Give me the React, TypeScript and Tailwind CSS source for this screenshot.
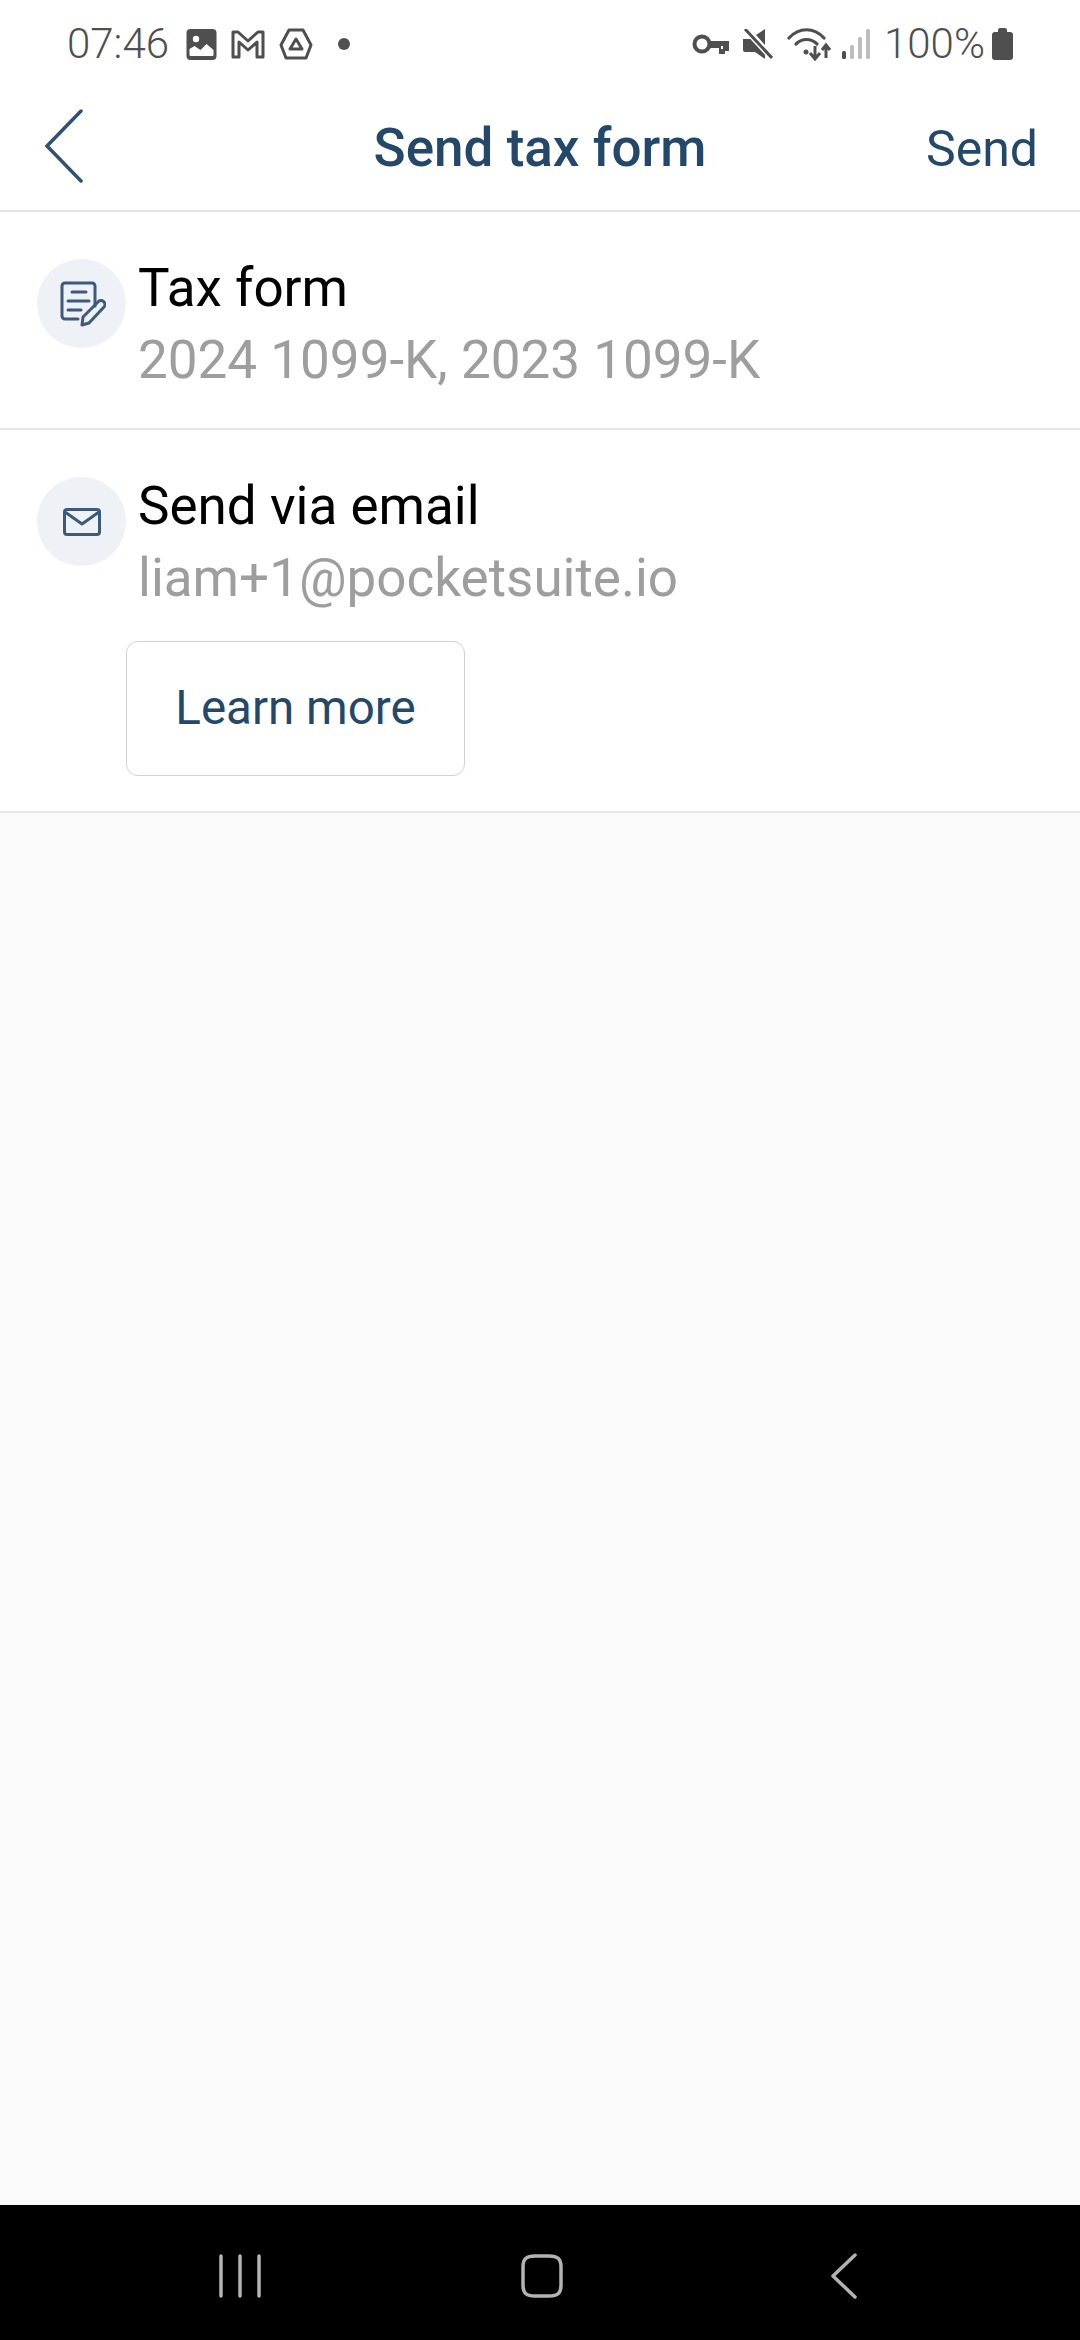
import React from "react";

const StatusIcons = () => (
  <div className="flex items-center h-[88px] pl-[67px] pr-[67px] text-[#4f4f4f] text-[42px] font-[350]">
    <span className="w-[119px] leading-none">07:46</span>
    <svg width="31" height="31" viewBox="0 0 30 31">
      <rect width="30" height="31" rx="4" fill="#4f4f4f" />
      <circle cx="9.5" cy="10" r="3.2" fill="#fff" />
      <path d="M3 26v-6l5-3 6 4 6-6 7 6v5a1 1 0 0 1-1 1H4a1 1 0 0 1-1-1z" fill="#fff" />
    </svg>
    <svg className="ml-[13px]" width="36" height="30" viewBox="0 0 34 30">
      <path d="M2 28V3h5l10 9 10-9h5v25h-6V13l-9 8-9-8v15z" fill="none" stroke="#4f4f4f" strokeWidth="3" strokeLinejoin="round" />
    </svg>
    <svg className="ml-[12px]" width="36" height="32" viewBox="0 0 34 32">
      <path d="M10 2h14l8 15-5 13H7L2 17z" fill="none" stroke="#4f4f4f" strokeWidth="3" strokeLinejoin="round" />
      <path d="M17 11l6 10H11z" fill="none" stroke="#4f4f4f" strokeWidth="3" strokeLinejoin="round" />
    </svg>
    <span className="ml-[24px] w-[12px] h-[12px] rounded-full bg-[#4f4f4f]" />
    <div className="flex-1" />
    <svg width="37" height="22" viewBox="0 0 37 22">
      <circle cx="10" cy="11" r="7.5" fill="none" stroke="#4f4f4f" strokeWidth="4" />
      <path d="M17 8h20v10h-4v3h-6v-6h-10z" fill="#4f4f4f" />
      <path d="M31 13v3h-2v-3z" fill="#fff" />
    </svg>
    <svg className="ml-[14px]" width="30" height="30" viewBox="0 0 30 30">
      <path d="M0 10h7l3-2 12 12v10l-10-7H2a2 2 0 0 1-2-2z" fill="#4f4f4f" />
      <path d="M13 6l9-6v16z" fill="#4f4f4f" />
      <path d="M3 1l26 28" stroke="#fff" strokeWidth="6" />
      <path d="M2 0l27 29" stroke="#4f4f4f" strokeWidth="3" />
    </svg>
    <svg className="ml-[14px]" width="46" height="34" viewBox="0 0 46 34">
      <path d="M2 11C12 0 27 0 37 11" fill="none" stroke="#4f4f4f" strokeWidth="3.2" strokeLinecap="round" />
      <path d="M9 17c6-6 15-6 21 0" fill="none" stroke="#4f4f4f" strokeWidth="3.2" strokeLinecap="round" />
      <circle cx="19" cy="25" r="2.5" fill="#4f4f4f" />
      <path d="M28 19v12M23 26l5 6 5-6" fill="none" stroke="#4f4f4f" strokeWidth="3" />
      <path d="M39 31V19M35 23l4-5 4 5" fill="none" stroke="#4f4f4f" strokeWidth="3" />
    </svg>
    <svg className="ml-[9px]" width="28" height="30" viewBox="0 0 28 30">
      <rect x="0" y="22" width="4" height="8" rx="1.5" fill="#4f4f4f" />
      <rect x="8" y="16" width="4" height="14" rx="1.5" fill="#bdbdbd" />
      <rect x="16" y="8" width="4" height="22" rx="1.5" fill="#bdbdbd" />
      <rect x="24" y="0" width="4" height="30" rx="1.5" fill="#bdbdbd" />
    </svg>
    <span className="ml-[14px] w-[108px] leading-none">100%</span>
    <svg width="21" height="32" viewBox="0 0 21 32">
      <path d="M6 2a2 2 0 0 1 2-2h5a2 2 0 0 1 2 2v2h3a3 3 0 0 1 3 3v22a3 3 0 0 1-3 3H3a3 3 0 0 1-3-3V7a3 3 0 0 1 3-3h3z" fill="#4f4f4f" />
    </svg>
  </div>
);

const Row = ({ icon, title, sub }: { icon: React.ReactNode; title: string; sub: string }) => (
  <div className="flex pl-[37px]">
    <div className="mt-[8px] w-[89px] h-[89px] rounded-full bg-[#eef1f5] flex items-center justify-center shrink-0">{icon}</div>
    <div className="ml-[12px] mt-[1px] text-[53px] leading-[72px]">
      <div className="text-black">{title}</div>
      <div className="text-[#9e9e9e]">{sub}</div>
    </div>
  </div>
);

export default function App() {
  return (
    <div className="w-[1080px] h-[2340px] flex flex-col bg-[#fafafa] font-['Roboto',sans-serif] overflow-hidden">
      <div className="bg-white">
        <StatusIcons />
        <div className="relative flex items-center justify-between h-[124px] pl-[44px] pr-[42px] border-b-2 border-[#e2e4e6] text-[#24486a]">
          <svg className="mb-[6px]" width="40" height="74" viewBox="0 0 40 74">
            <path d="M37 2L3 37l34 35" fill="none" stroke="#2f5273" strokeWidth="3.5" strokeLinecap="round" />
          </svg>
          <div className="absolute left-0 right-0 text-center text-[53px] font-medium">Send tax form</div>
          <div className="text-[50px]">Send</div>
        </div>
      </div>

      <div className="bg-white pt-[39px] pb-[32px] border-b-2 border-[#e4e8ea]">
        <Row
          title="Tax form"
          sub="2024 1099-K, 2023 1099-K"
          icon={
            <svg width="48" height="46" viewBox="0 0 48 46" fill="none" stroke="#3d5a7a" strokeWidth="3" strokeLinecap="round" strokeLinejoin="round">
              <path d="M20 38H7a3 3 0 0 1-3-3V5a3 3 0 0 1 3-3h27a3 3 0 0 1 3 3v20" />
              <path d="M14 11h14M10 20h21M10 29h13" />
              <path d="M24 44l1-8 15-15a3.5 3.5 0 0 1 6 5L31 42z" />
            </svg>
          }
        />
      </div>

      <div className="bg-white pt-[39px] pb-[35px] border-b-2 border-[#e4e8ea]">
        <Row
          title="Send via email"
          sub="liam+1@pocketsuite.io"
          icon={
            <svg width="38" height="28" viewBox="0 0 38 28" fill="none" stroke="#3d5a7a" strokeWidth="3" strokeLinecap="round" strokeLinejoin="round">
              <rect x="1.5" y="1.5" width="35" height="25" rx="2.5" />
              <path d="M2 4l17 12L36 4" />
            </svg>
          }
        />
        <div className="ml-[126px] mt-[27px] w-[339px] h-[135px] rounded-[12px] border border-[#d2d2d2] flex items-center justify-center text-[#24486a] text-[47.5px]">
          Learn more
        </div>
      </div>

      <div className="flex-1" />

      <div className="h-[135px] bg-black grid grid-cols-3 items-center w-full pl-[89px] pr-[85px] pt-[6px]">
        <svg className="justify-self-center" width="42" height="44" viewBox="0 0 42 44" fill="none" stroke="#b3b3b3" strokeWidth="3.5" strokeLinecap="round">
          <path d="M2 2v40M21 2v40M40 2v40" />
        </svg>
        <svg className="justify-self-center" width="44" height="46" viewBox="0 0 44 46" fill="none" stroke="#b3b3b3" strokeWidth="3.5">
          <path d="M15 3h14c9 0 12 3 12 11v18c0 8-3 11-12 11H15C6 43 3 40 3 32V14C3 6 6 3 15 3z" />
        </svg>
        <svg className="justify-self-center" width="28" height="46" viewBox="0 0 28 46" fill="none" stroke="#b3b3b3" strokeWidth="3.5" strokeLinecap="round" strokeLinejoin="round">
          <path d="M25 2L3 23l22 21" />
        </svg>
      </div>
    </div>
  );
}
